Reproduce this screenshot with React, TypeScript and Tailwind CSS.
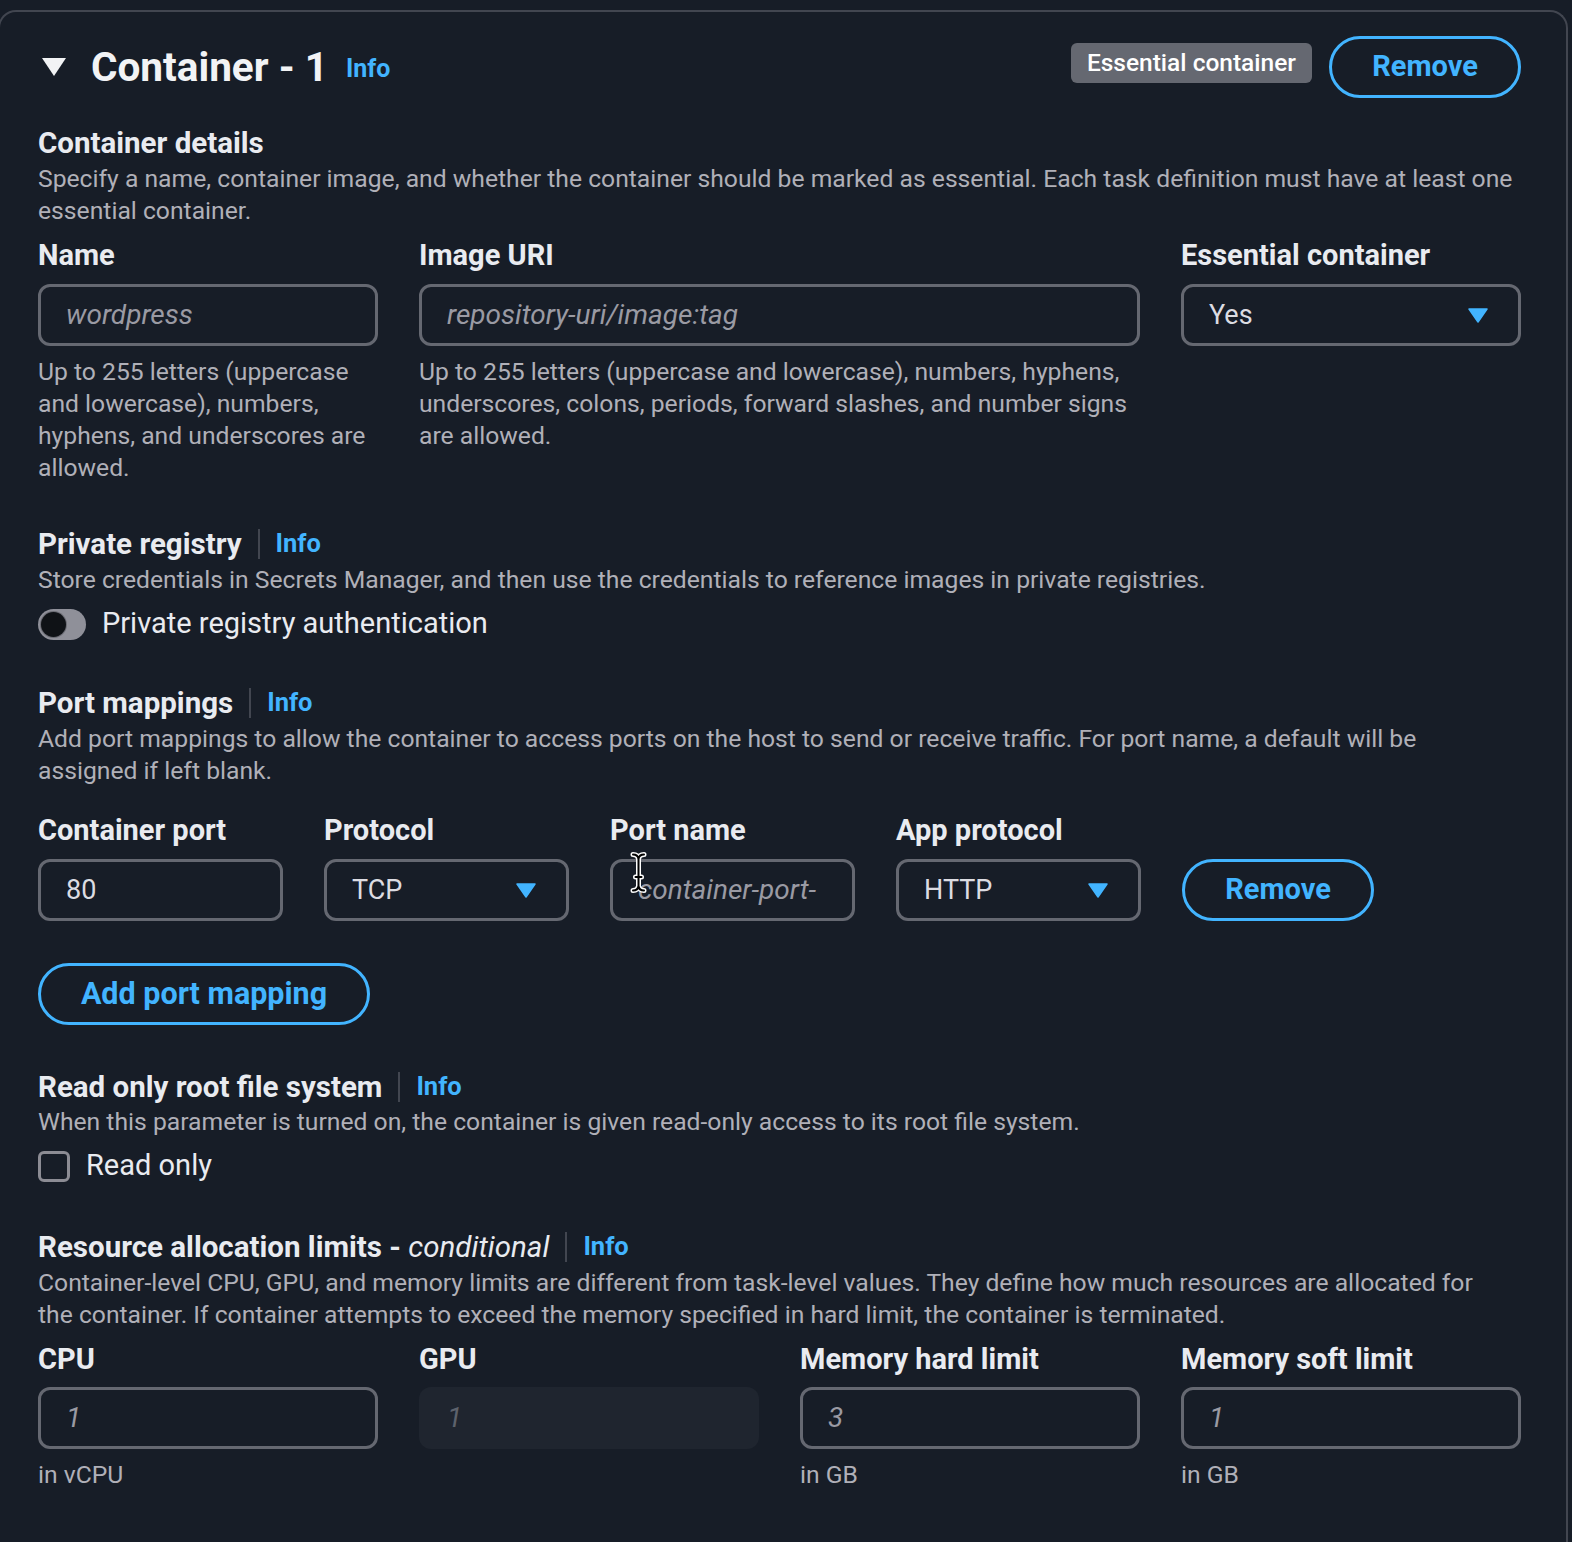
import React from "react"

const BLUE = "text-[#42b4ff]"

function Info({ size = "text-[25.5px]" }: { size?: string }) {
  return <span className={`${size} font-bold ${BLUE} leading-none`}>Info</span>
}

function SectionHeading({ children }: { children: React.ReactNode }) {
  return (
    <div className="flex h-[36px] items-center">
      <h3 className="text-[29.5px] font-bold leading-[36px] text-[#e9ebf0]">{children}</h3>
      <span className="mx-[16px] h-[30px] w-[2px] bg-[#424650]" />
      <Info />
    </div>
  )
}

function Desc({ children, className = "" }: { children: React.ReactNode; className?: string }) {
  return <p className={`text-[24.7px] leading-[32px] text-[#b0b0b8] ${className}`}>{children}</p>
}

function Label({ children }: { children: React.ReactNode }) {
  return <div className="whitespace-nowrap text-[29px] font-bold leading-[36px] text-[#e9ebf0]">{children}</div>
}

function TextInput({ value, placeholder, disabled }: { value?: string; placeholder?: string; disabled?: boolean }) {
  if (disabled) {
    return (
      <div className="flex h-[62px] items-center rounded-[12px] bg-[#1f252f] px-[28px] text-[28px] italic text-[#5d626c]">
        {placeholder}
      </div>
    )
  }
  return (
    <div className="flex h-[62px] items-center overflow-hidden whitespace-nowrap rounded-[12px] border-[3px] border-[#656871] px-[25px]">
      {value ? (
        <span className="text-[27px] text-[#dcdce2]">{value}</span>
      ) : (
        <span className="text-[28px] italic text-[#9a9aa3]">{placeholder}</span>
      )}
    </div>
  )
}

function Caret() {
  return (
    <svg width="20" height="15" viewBox="0 0 20 15" className="shrink-0">
      <path d="M1 1 H19 L10 14 Z" fill="#42b4ff" stroke="#42b4ff" strokeWidth="1.5" strokeLinejoin="round" />
    </svg>
  )
}

function Select({ value }: { value: string }) {
  return (
    <div className="flex h-[62px] items-center justify-between rounded-[12px] border-[3px] border-[#656871] pl-[25px] pr-[30px] text-[27px] text-[#dcdce2]">
      <span>{value}</span>
      <Caret />
    </div>
  )
}

function OutlineButton({ children, className = "" }: { children: React.ReactNode; className?: string }) {
  return (
    <button
      className={`flex h-[62px] items-center justify-center rounded-full border-[3px] border-[#42b4ff] font-bold ${BLUE} ${className}`}
    >
      {children}
    </button>
  )
}

function Hint({ children }: { children: React.ReactNode }) {
  return <p className="mt-[10px] text-[24.7px] leading-[32px] text-[#b0b0b8]">{children}</p>
}

function Field({
  label,
  children,
  hint,
  className = "",
  gap = "mt-[11px]",
}: {
  label: string
  children: React.ReactNode
  hint?: string
  className?: string
  gap?: string
}) {
  return (
    <div className={className}>
      <Label>{label}</Label>
      <div className={gap}>{children}</div>
      {hint && <Hint>{hint}</Hint>}
    </div>
  )
}

function TextCursor() {
  const d = "M3 2.5 C6 2.5 8 3.5 8.5 7 C9 3.5 11 2.5 14 2.5 M8.5 7 V34 M3 38.5 C6 38.5 8 37.5 8.5 34 C9 37.5 11 38.5 14 38.5 M5.5 25 H11.5"
  return (
    <svg width="17" height="41" viewBox="0 0 17 41" className="absolute left-[20px] top-[-7px]">
      <path d={d} fill="none" stroke="#ffffff" strokeWidth="5" strokeLinecap="round" strokeLinejoin="round" />
      <path d={d} fill="none" stroke="#000000" strokeWidth="2" strokeLinecap="round" strokeLinejoin="round" />
    </svg>
  )
}

export default function App() {
  return (
    <div className="min-h-screen bg-[#171d27] pt-[10px] font-['Roboto',sans-serif] text-[#e9ebf0]">
      <div className="-ml-[2px] mr-[4px] rounded-t-[18px] border-2 border-b-0 border-[#424650] pb-[80px] pl-[38px] pr-[45px] pt-[24px]">
        {/* header */}
        <div className="flex h-[62px] items-center">
          <svg width="26" height="20" viewBox="0 0 26 20" className="ml-[3px] mr-[24px]">
            <path d="M1 1 H25 L13 19 Z" fill="#f2f3f5" />
          </svg>
          <h2 className="text-[40.5px] font-bold leading-none text-[#f2f3f5]">Container - 1</h2>
          <span className="ml-[18px] mt-[6px]">
            <Info size="text-[25px]" />
          </span>
          <div className="ml-auto flex items-center gap-[17px]">
            <span className="mb-[8px] flex h-[40px] items-center rounded-[6px] bg-[#656871] px-[16px] text-[24.5px] font-medium text-white">
              Essential container
            </span>
            <OutlineButton className="w-[192px] text-[29px]">Remove</OutlineButton>
          </div>
        </div>

        {/* container details */}
        <h3 className="mt-[27px] text-[29.5px] font-bold leading-[36px] text-[#e9ebf0]">Container details</h3>
        <Desc className="mt-[2px]">
          Specify a name, container image, and whether the container should be marked as essential. Each task definition
          must have at least one essential container.
        </Desc>
        <div className="mt-[10px] grid grid-cols-4 gap-x-[41px]">
          <Field
            label="Name"
            hint="Up to 255 letters (uppercase and lowercase), numbers, hyphens, and underscores are allowed."
          >
            <TextInput placeholder="wordpress" />
          </Field>
          <Field
            label="Image URI"
            className="col-span-2"
            hint="Up to 255 letters (uppercase and lowercase), numbers, hyphens, underscores, colons, periods, forward slashes, and number signs are allowed."
          >
            <TextInput placeholder="repository-uri/image:tag" />
          </Field>
          <Field label="Essential container">
            <Select value="Yes" />
          </Field>
        </div>

        {/* private registry */}
        <div className="mt-[42px]">
          <SectionHeading>Private registry</SectionHeading>
        </div>
        <Desc className="mt-[2px]">
          Store credentials in Secrets Manager, and then use the credentials to reference images in private registries.
        </Desc>
        <div className="mt-[10px] flex h-[36px] items-center gap-[16px]">
          <span className="flex h-[31px] w-[48px] items-center rounded-full bg-[#8f9099] pl-[3px]">
            <span className="h-[25px] w-[25px] rounded-full bg-[#0f1216] ring-1 ring-[#6b6c74]" />
          </span>
          <span className="text-[29px] text-[#e9ebf0]">Private registry authentication</span>
        </div>

        {/* port mappings */}
        <div className="mt-[43px]">
          <SectionHeading>Port mappings</SectionHeading>
        </div>
        <Desc className="mt-[2px] max-w-[1455px]">
          Add port mappings to allow the container to access ports on the host to send or receive traffic. For port name, a
          default will be assigned if left blank.
        </Desc>
        <div className="mt-[25px] flex items-end gap-[41px]">
          <Field label="Container port" className="w-[245px]">
            <TextInput value="80" />
          </Field>
          <Field label="Protocol" className="w-[245px]">
            <Select value="TCP" />
          </Field>
          <Field label="Port name" className="w-[245px]">
            <div className="relative">
              <TextInput placeholder="container-port-" />
              <TextCursor />
            </div>
          </Field>
          <Field label="App protocol" className="w-[245px]">
            <Select value="HTTP" />
          </Field>
          <OutlineButton className="w-[192px] text-[29px]">Remove</OutlineButton>
        </div>
        <OutlineButton className="mt-[42px] w-[332px] text-[30.5px]">Add port mapping</OutlineButton>

        {/* read only */}
        <div className="mt-[44px]">
          <SectionHeading>Read only root file system</SectionHeading>
        </div>
        <Desc className="mt-[1px]">
          When this parameter is turned on, the container is given read-only access to its root file system.
        </Desc>
        <div className="mt-[10px] flex h-[36px] items-center gap-[16px]">
          <span className="h-[31px] w-[32px] rounded-[6px] border-[3px] border-[#8c8c94]" />
          <span className="text-[29px] text-[#e9ebf0]">Read only</span>
        </div>

        {/* resource limits */}
        <div className="mt-[45px]">
          <SectionHeading>
            Resource allocation limits - <i className="font-normal">conditional</i>
          </SectionHeading>
        </div>
        <Desc className="mt-[2px] max-w-[1455px]">
          Container-level CPU, GPU, and memory limits are different from task-level values. They define how much resources
          are allocated for the container. If container attempts to exceed the memory specified in hard limit, the
          container is terminated.
        </Desc>
        <div className="mt-[10px] grid grid-cols-4 gap-x-[41px]">
          <Field label="CPU" hint="in vCPU" gap="mt-[10px]">
            <TextInput placeholder="1" />
          </Field>
          <Field label="GPU" gap="mt-[10px]">
            <TextInput placeholder="1" disabled />
          </Field>
          <Field label="Memory hard limit" hint="in GB" gap="mt-[10px]">
            <TextInput placeholder="3" />
          </Field>
          <Field label="Memory soft limit" hint="in GB" gap="mt-[10px]">
            <TextInput placeholder="1" />
          </Field>
        </div>
      </div>
    </div>
  )
}
